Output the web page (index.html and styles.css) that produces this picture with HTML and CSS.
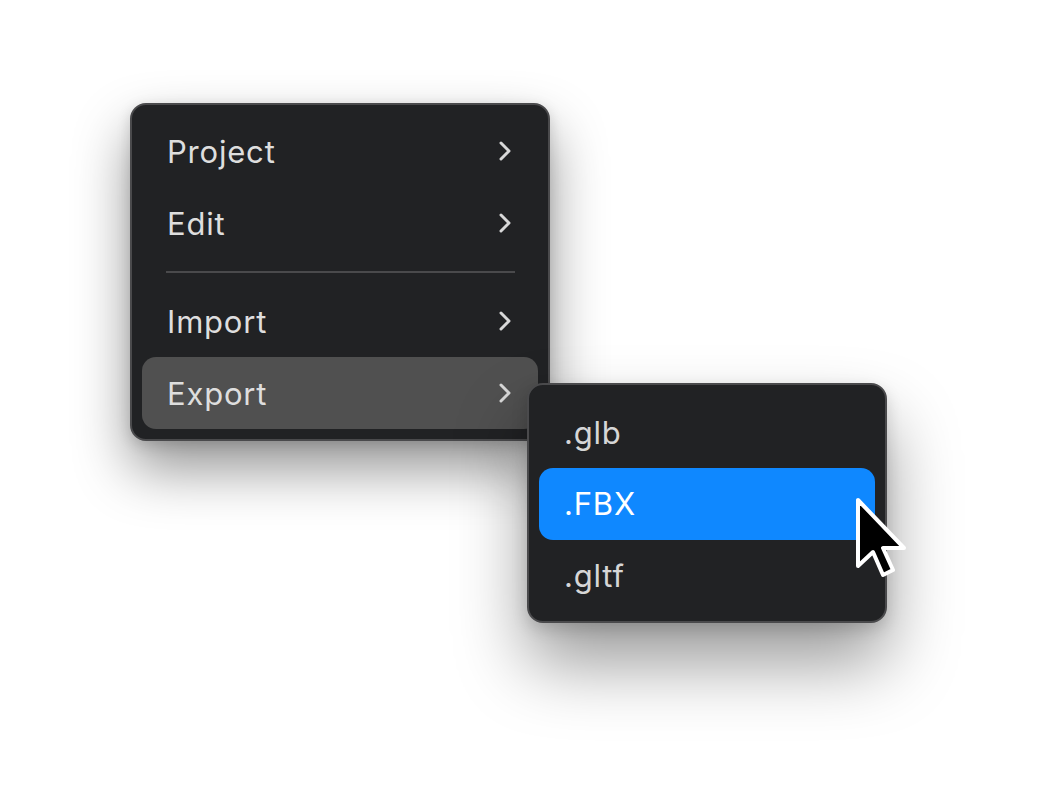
FILE: index.html
```html
<!DOCTYPE html>
<html>
<head>
<meta charset="utf-8">
<link rel="stylesheet" href="styles.css">
</head>
<body>
<div class="stage">
  <div class="menu-wrap">
    <div class="menu main">
      <div class="item"><span>Project</span><svg class="chev" viewBox="0 0 14 22"><path d="M3 3 L11 11 L3 19"/></svg></div>
      <div class="item"><span>Edit</span><svg class="chev" viewBox="0 0 14 22"><path d="M3 3 L11 11 L3 19"/></svg></div>
      <div class="sep"><div class="line"></div></div>
      <div class="item"><span>Import</span><svg class="chev" viewBox="0 0 14 22"><path d="M3 3 L11 11 L3 19"/></svg></div>
      <div class="item hover"><span>Export</span><svg class="chev" viewBox="0 0 14 22"><path d="M3 3 L11 11 L3 19"/></svg></div>
    </div>
    <div class="menu sub">
      <div class="item"><span>.glb</span></div>
      <div class="item active"><span>.FBX</span></div>
      <div class="item"><span>.gltf</span></div>
    </div>
    <svg class="cursor" viewBox="-4 -4 56 86"><path d="M0 0 L0 66 L15 52 L25 75 L35 70 L25 48 L46 48 Z"/></svg>
  </div>
</div>
</body>
</html>
```
FILE: styles.css
```css
html, body {
  margin: 0;
  padding: 0;
  background: #ffffff;
}
body {
  font-family: "Inter", "Noto Sans", sans-serif;
  width: 1037px;
  height: 804px;
  overflow: hidden;
}
.stage {
  padding: 103px 0 0 130px;
}
.menu-wrap {
  position: relative;
  width: 420px;
}
.menu {
  box-sizing: border-box;
  background: #212224;
  border: 2px solid #4a4a4c;
  border-radius: 16px;
  display: flex;
  flex-direction: column;
}
.main {
  width: 420px;
  padding: 10px;
  box-shadow: 0 28px 55px rgba(0,0,0,0.42), 0 4px 14px rgba(0,0,0,0.15);
}
.item {
  height: 72px;
  display: flex;
  align-items: center;
  justify-content: space-between;
  padding: 0 26px 0 25px;
  border-radius: 14px;
  color: #dedede;
  font-size: 31px;
  font-weight: 380;
  letter-spacing: 0.8px;
}
.chev {
  width: 14px;
  height: 22px;
}
.chev path {
  fill: none;
  stroke: #d8d8d8;
  stroke-width: 3;
  stroke-linecap: round;
  stroke-linejoin: round;
}
.sep {
  height: 26px;
  display: flex;
  align-items: center;
  padding: 0 23px 0 24px;
}
.sep .line {
  flex: 1;
  height: 2px;
  background: #4a4a4c;
}
.hover {
  background: #505050;
}
.sub {
  position: absolute;
  left: 397px;
  top: 280px;
  width: 360px;
  height: 240px;
  padding: 12px 10px 10px 10px;
  box-shadow: 0 40px 70px rgba(0,0,0,0.40), 0 6px 16px rgba(0,0,0,0.15);
}
.sub .item {
  color: #d6d6d6;
}
.active {
  background: #0f88ff;
  color: #ffffff !important;
}
.cursor {
  position: absolute;
  left: 724px;
  top: 393px;
  width: 56px;
  height: 86px;
  overflow: visible;
}
.cursor path {
  fill: #000;
  stroke: #fff;
  stroke-width: 4;
  stroke-linejoin: round;
}
```
